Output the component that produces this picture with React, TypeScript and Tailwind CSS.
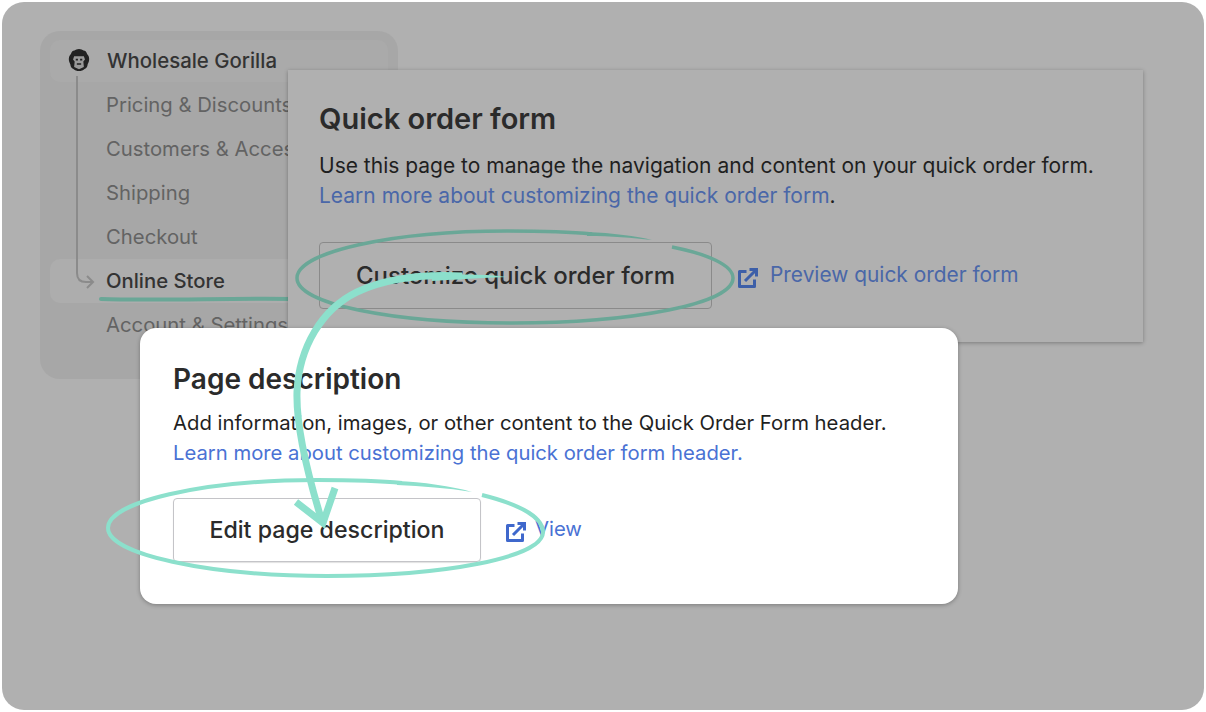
const font = "font-['Inter','Noto_Sans',sans-serif]"

const navItems = [
  { label: "Pricing & Discounts" },
  { label: "Customers & Access" },
  { label: "Shipping" },
  { label: "Checkout" },
  { label: "Online Store", active: true },
  { label: "Account & Settings" },
]

function ExternalIcon({ className }: { className: string }) {
  return (
    <svg viewBox="0 0 22 22" fill="none" stroke="currentColor" strokeWidth="3" className={className}>
      <path d="M9.5 4.5H2.5V19.5H17.5V12.5" strokeLinejoin="round" />
      <path d="M8 14L18.5 3.5" />
      <path d="M12.5 2.5H19.5V9.5" />
    </svg>
  )
}

function GorillaLogo() {
  return (
    <svg viewBox="2 0 20 24" className="h-[26px] w-[22px] shrink-0">
      <path
        d="M12 1c2 0 3 .8 4.200 1.200 1.500.2 2.600 1 3 2.600.2 1 1.300 1.700 1.800 3 .5 1.500.5 3.200.1 4.700-.2 1.100-1.100 1.900-1.200 3.100-.2 1.600-1 2.900-2.400 3.500-1 .5-1.500 1.300-2.700 1.700-1.900.700-3.700.700-5.600 0-1.200-.4-1.700-1.200-2.700-1.700-1.400-.6-2.200-1.900-2.400-3.500-.1-1.200-1-2-1.200-3.100-.4-1.500-.4-3.200.1-4.700.5-1.300 1.600-2 1.800-3 .4-1.600 1.500-2.400 3-2.600C9 1.800 10 1 12 1z"
        fill="#222"
      />
      <path d="M7.500 7.500h9l1 3-1.500 2 .5 5-4.500 2-4.500-2 .5-5-1.500-2z" fill="#9a9a9a" />
      <path d="M9 10h2v1.500H9zM13 10h2v1.500h-2zM10 14h4v1.500h-4z" fill="#222" />
    </svg>
  )
}

export default function App() {
  return (
    <div className={`${font} h-[712px] w-[1206px] overflow-hidden bg-white p-[2px]`}>
      <div className="relative h-[708px] w-[1202px] overflow-hidden rounded-[22px] bg-[#b0b0b0]">
        {/* dimmed sidebar */}
        <div className="absolute left-[38px] top-[29px] h-[348px] w-[358px] rounded-[20px] bg-[#a7a7a7] px-[10px] pt-[9px]">
          <div className="flex h-[42px] items-center gap-[17px] rounded-[10px] bg-[#aaaaaa] pl-[18px] text-[20.400px] font-medium text-[#333]">
            <GorillaLogo />
            <span>Wholesale Gorilla</span>
          </div>
          <div className="mt-[1px] flex flex-col">
            {navItems.map((item) => (
              <div
                key={item.label}
                className={
                  item.active
                    ? "flex h-[44px] items-center rounded-[10px] bg-[#adadad] pl-[56px] text-[20.300px] font-medium text-[#333]"
                    : "flex h-[44px] items-center pl-[56px] text-[20.300px] text-[#636363]"
                }
              >
                {item.label}
              </div>
            ))}
          </div>
        </div>

        {/* connector + underline, lives over the sidebar */}
        <svg className="absolute left-0 top-0" width="1202" height="708" fill="none">
          <path d="M75 74V271Q75 280 84 280H91" stroke="#8b8b8b" strokeWidth="2" />
          <path d="M85 274L91 280L85 286" stroke="#8b8b8b" strokeWidth="2" />
          <path d="M99 297C150 299 230 296 290 297" stroke="#6aa797" strokeWidth="4" strokeLinecap="round" />
        </svg>

        {/* dimmed card */}
        <div className="absolute left-[286px] top-[68px] h-[272px] w-[855px] bg-[#b0b0b0] pl-[31px] pt-[29px] shadow-[0_1px_4px_rgba(0,0,0,0.3)]">
          <h2 className="text-[29px] font-semibold leading-[40px] text-[#2b2b2b]">Quick order form</h2>
          <p className="mt-[12px] text-[21px] leading-[30px] text-[#1f1f1f]">
            Use this page to manage the navigation and content on your quick order form.
          </p>
          <p className="text-[21px] leading-[30px] text-[#1f1f1f]">
            <span className="text-[#4a67a8]">Learn more about customizing the quick order form</span>.
          </p>
          <div className="mt-[31px] flex items-center">
            <div className="flex h-[67px] w-[393px] items-center justify-center rounded-[4px] border border-[#8a8a8a] text-[24px] font-medium text-[#2b2b2b]">
              Customize quick order form
            </div>
            <ExternalIcon className="ml-[25px] mt-[4px] h-[22px] w-[22px] text-[#3d5fa8]" />
            <span className="mb-[2px] ml-[11px] text-[20.900px] text-[#4a67a8]">Preview quick order form</span>
          </div>
        </div>

        <svg className="absolute left-0 top-0" width="1202" height="708" fill="none">
          <path
            d="M670 245C705 252 731 263 731 276C731 302 630 321 510 321C390 321 295 302 295 276C295 250 390 229 505 229C540 229 570 230 590 232"
            stroke="#6aa797"
            strokeWidth="3.500"
          />
          <path d="M585 230C610 231 635 234 650 238C630 236 610 234 585 234Z" fill="#6aa797" />
        </svg>

        {/* highlighted card */}
        <div className="absolute left-[138px] top-[326px] h-[276px] w-[818px] rounded-[16px] bg-white pl-[33px] pt-[31px] shadow-[0_1px_4px_rgba(0,0,0,0.3)]">
          <h2 className="text-[28px] font-semibold leading-[40px] text-[#2b2b2b]">Page description</h2>
          <p className="mt-[9px] text-[20.300px] leading-[30px] text-[#1f1f1f]">
            Add information, images, or other content to the Quick Order Form header.
          </p>
          <p className="text-[20.250px] leading-[30px] text-[#4a72d4]">
            Learn more about customizing the quick order form header.
          </p>
          <div className="mt-[30px] flex items-center">
            <div className="flex h-[64px] w-[308px] items-center justify-center rounded-[4px] border border-[#c4c4c8] text-[23.200px] font-medium text-[#2b2b2b] shadow-[0_1px_1px_rgba(0,0,0,0.12)]">
              Edit page description
            </div>
            <ExternalIcon className="ml-[24px] mt-[4px] h-[22px] w-[22px] text-[#3f68cc]" />
            <span className="mb-[2px] ml-[8px] text-[20.300px] text-[#4a72d4]">View</span>
          </div>
        </div>

        {/* hand drawn circle and arrow on top */}
        <svg className="absolute left-0 top-0" width="1202" height="708" fill="none">
          <path
            d="M480 493C520 503 541 516 541 530C541 556 440 574 325 574C205 574 106 552 106 526C106 500 200 478 315 478C350 478 380 479 400 481"
            stroke="#8ce0cc"
            strokeWidth="4"
          />
          <path d="M395 479C420 480 450 484 470 490C445 486 420 484 395 483Z" fill="#8ce0cc" />
          <path
            d="M460 274C420 272 385 276 355 290C320 307 297 345 295 390C294 425 305 470 319 516"
            stroke="#8ce0cc"
            strokeWidth="7"
          />
          <path d="M505 275C480 272 455 272 430 274L430 279C455 277 480 276 505 275Z" fill="#8ce0cc" />
          <path d="M294 500L321 521L333 486" stroke="#8ce0cc" strokeWidth="7" strokeLinejoin="miter" />
        </svg>
      </div>
    </div>
  )
}
